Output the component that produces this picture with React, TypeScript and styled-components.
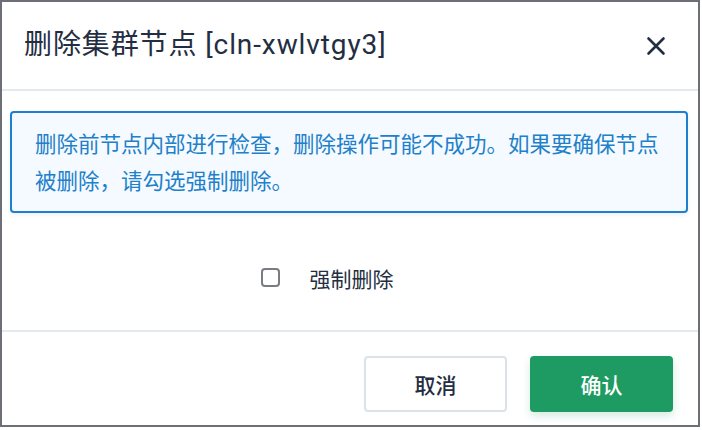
import React from 'react';
import styled, { createGlobalStyle } from 'styled-components';

const GlobalStyle = createGlobalStyle`
  html, body {
    margin: 0;
    padding: 0;
    background: #ffffff;
  }
  body {
    font-family: Roboto, "Noto Sans CJK SC", sans-serif;
    -webkit-font-smoothing: antialiased;
  }
`;

const Modal = styled.div`
  width: 700px;
  height: 427px;
  box-sizing: border-box;
  border: 2px solid #6d6f76;
  background: #ffffff;
  display: flex;
  flex-direction: column;
`;

const Header = styled.div`
  height: 89px;
  flex-shrink: 0;
  box-sizing: border-box;
  display: flex;
  align-items: center;
  justify-content: space-between;
  padding: 0 30px 0 22px;
  border-bottom: 2px solid #e3e9ef;
`;

const Title = styled.h2`
  margin: 0;
  font-size: 28px;
  font-weight: 400;
  color: #242e42;
  line-height: 1;
  margin-top: -2px;
  letter-spacing: 0.9px;
`;

const CloseButton = styled.button`
  border: 0;
  background: none;
  padding: 0;
  width: 24px;
  height: 24px;
  display: flex;
  align-items: center;
  justify-content: center;
  cursor: pointer;
  color: #242e42;
`;

const Body = styled.div`
  flex: 1;
  padding: 20px 10px 0 8px;
  display: flex;
  flex-direction: column;
  border-bottom: 2px solid #e3e9ef;
`;

const Alert = styled.div`
  border: 2px solid #1d7fcf;
  border-radius: 4px;
  background: #f4faff;
  padding: 13px 23px 11px;
  color: #2180c9;
  font-size: 21.5px;
  line-height: 37px;
  box-shadow: 0 2px 4px rgba(36, 46, 66, 0.08);
`;

const CheckRow = styled.label`
  flex: 1;
  display: flex;
  align-items: center;
  justify-content: center;
  gap: 30px;
  padding: 12px 44px 0 0;
  font-size: 21px;
  color: #242e42;
  cursor: pointer;
`;

const Box = styled.span`
  width: 15px;
  height: 15px;
  border: 2px solid #797c83;
  border-radius: 4px;
  background: #ffffff;
`;

const Footer = styled.div`
  height: 93px;
  flex-shrink: 0;
  box-sizing: border-box;
  display: flex;
  justify-content: flex-end;
  align-items: flex-start;
  gap: 23px;
  padding: 24px 25px 0 0;
`;

const Button = styled.button<{ $primary?: boolean }>`
  width: 143px;
  height: 56px;
  border-radius: 4px;
  font-family: Roboto, "Noto Sans CJK SC", sans-serif;
  font-size: 21px;
  font-weight: 500;
  cursor: pointer;
  box-sizing: border-box;
  border: ${p => (p.$primary ? '0' : '2px solid #dbe2ea')};
  background: ${p => (p.$primary ? '#1e9b63' : '#ffffff')};
  color: ${p => (p.$primary ? '#ffffff' : '#242e42')};
  box-shadow: ${p =>
    p.$primary ? '0 4px 8px rgba(30, 155, 99, 0.2)' : 'none'};
`;

const CloseIcon = (): JSX.Element => (
  <svg width="22" height="22" viewBox="0 0 22 22" fill="none">
    <path
      d="M3.5 3.5 L18.5 18.5 M18.5 3.5 L3.5 18.5"
      stroke="currentColor"
      strokeWidth="2.6"
      strokeLinecap="round"
    />
  </svg>
);

const App = (): JSX.Element => (
  <>
    <GlobalStyle />
    <Modal>
      <Header>
        <Title>删除集群节点 [cln-xwlvtgy3]</Title>
        <CloseButton aria-label="close">
          <CloseIcon />
        </CloseButton>
      </Header>
      <Body>
        <Alert>
          删除前节点内部进行检查，删除操作可能不成功。如果要确保节点被删除，请勾选强制删除。
        </Alert>
        <CheckRow>
          <Box />
          强制删除
        </CheckRow>
      </Body>
      <Footer>
        <Button>取消</Button>
        <Button $primary>确认</Button>
      </Footer>
    </Modal>
  </>
);

export default App;
